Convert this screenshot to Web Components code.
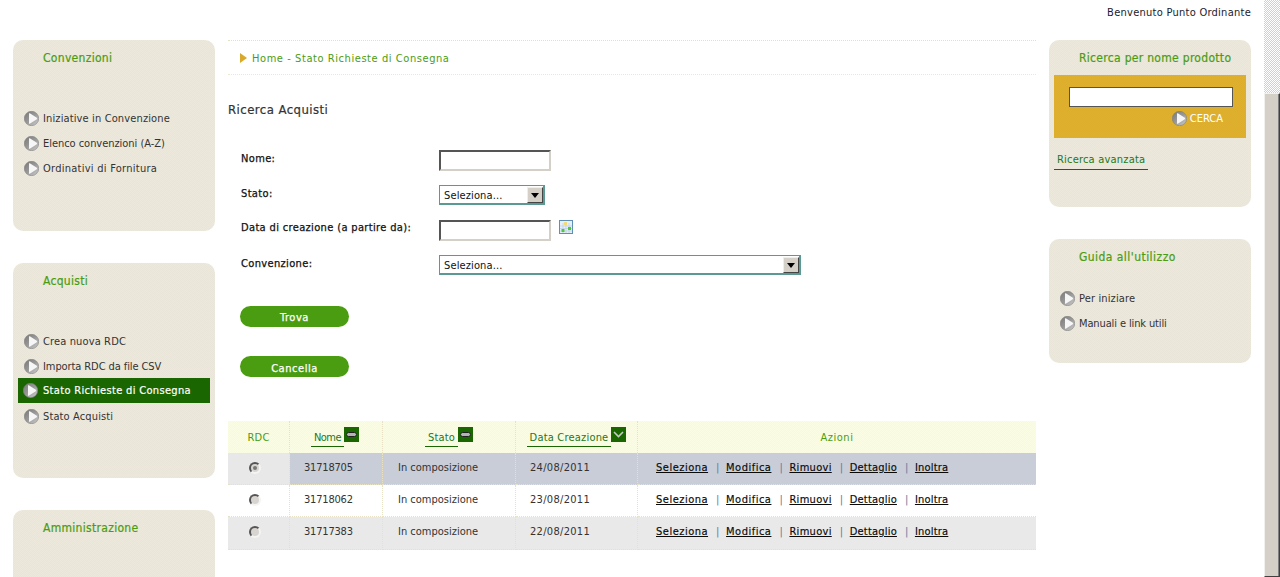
<!DOCTYPE html>
<html lang="it">
<head>
<meta charset="utf-8">
<title>Stato Richieste di Consegna</title>
<style>
  html, body { margin: 0; height: 577px; overflow: hidden; background: #fff; }
  body { font: 11px "DejaVu Sans", Verdana, sans-serif; font-stretch: condensed; color: #333; }
</style>
</head>
<body>
<script>
const BALL = `<svg width="15" height="15" viewBox="0 0 15 15" aria-hidden="true">
  <defs><linearGradient id="b" x1="0" y1="0" x2="1" y2="1"><stop offset="0" stop-color="#777"/><stop offset=".5" stop-color="#999"/><stop offset="1" stop-color="#d0d0d0"/></linearGradient></defs>
  <circle cx="7.5" cy="7.5" r="7.2" fill="url(#b)" stroke="#808080" stroke-width=".6"/>
  <path d="M5 2.2Q5.6 2 6.2 2.4L12.8 6.8Q13.6 7.5 12.8 8.2L6.2 12.6Q5.6 13 5 12.8Z" fill="#f6f6f6"/></svg>`;

function define(name, html, init) {
  const tpl = document.createElement('template');
  tpl.innerHTML = html;
  customElements.define(name, class extends HTMLElement {
    constructor() {
      super();
      this.attachShadow({ mode: 'open' });
      this.shadowRoot.appendChild(tpl.content.cloneNode(true));
      if (init) init(this, this.shadowRoot);
    }
  });
}

define('side-panel', `
  <style>
    :host { display: block; box-sizing: border-box; padding: 10px 5px 0; border-radius: 10px;
      background: repeating-conic-gradient(#ece8dc 0 25%, #e9e5d8 0 50%) 0 0 / 2px 2px; }
    h2 { margin: 0; padding-left: var(--title-indent, 25px); font-size: 12px; line-height: 16px; font-weight: normal; letter-spacing: var(--title-ls, .3px); color: #4b9c10; -webkit-text-stroke: .2px #4b9c10; }
    .body { margin-top: var(--body-gap, 40px); }
  </style>
  <h2><slot name="title"></slot></h2>
  <div class="body"><slot></slot></div>`);

define('menu-item', `
  <style>
    :host { display: flex; align-items: center; gap: 4px; height: 25px; padding-left: 6px; color: #333; letter-spacing: var(--ls, .13px); white-space: nowrap; }
    :host([active]) { background: #1a6600; color: #fff; padding-left: 5px; gap: 5px; margin-top: -1px; margin-bottom: 1px; letter-spacing: .33px; -webkit-text-stroke: .2px #fff; }
    svg { flex: none; }
  </style>
  ${BALL}<slot></slot>`);

define('bread-crumb', `
  <style>
    :host { display: flex; align-items: center; gap: 5px; height: 33px; padding-left: 12px;
      border-top: 1px dotted #e6dfc0; border-bottom: 1px dotted #efe8cc; color: #4b9c10; letter-spacing: .57px; white-space: nowrap; }
    i { width: 0; height: 0; border-left: 7px solid #d9a92a; border-top: 5px solid transparent; border-bottom: 5px solid transparent; }
    span { padding-top: 2px; }
  </style>
  <i></i><span><slot></slot></span>`);

define('form-row', `
  <style>
    :host { display: grid; grid-template-columns: 198px 1fr; height: 35px; padding-left: 13px; }
    label { color: #111; -webkit-text-stroke: .25px #111; padding-top: var(--label-top, 2px); line-height: 14px; letter-spacing: .35px; white-space: nowrap; }
    div { display: flex; align-items: flex-start; gap: 8px; }
  </style>
  <label><slot name="label"></slot></label><div><slot></slot></div>`);

define('text-box', `
  <style>
    :host { display: block; box-sizing: border-box; width: 112px; height: 21px; background: #fff;
      border: 2px solid; border-color: #555 #d4d0c8 #d4d0c8 #555; }
  </style>`);

define('select-box', `
  <style>
    :host { display: flex; box-sizing: border-box; height: 20px; background: #fff; border: 1px solid #5a9a94; border-right-width: 2px; border-bottom-width: 2px; color: #111; }
    span { flex: 1; padding: 1px 0 0 4px; line-height: 18px; letter-spacing: .13px; }
    b { width: 16px; margin: 1px 0 0; box-sizing: border-box; background: #d4d0c8; border: 1px solid; border-color: #eee #444 #444 #eee; display: flex; align-items: center; justify-content: center; }
    b::after { content: ""; border-top: 5px solid #000; border-left: 4px solid transparent; border-right: 4px solid transparent; }
  </style>
  <span><slot></slot></span><b></b>`);

define('pill-button', `
  <style>
    :host { display: flex; align-items: center; justify-content: center; width: 109px; height: 21px; box-sizing: border-box; padding-top: 1px; border-radius: 11px;
      background: #4a9c10; color: #fff; letter-spacing: .55px; -webkit-text-stroke: .25px #fff; }
  </style>
  <slot></slot>`);

define('sort-link', `
  <style>
    :host { display: inline-flex; align-items: flex-start; color: #22781c; letter-spacing: .2px; }
    span { display: block; padding: 1px 3px 0; height: 17px; line-height: 17px; border-bottom: 1px solid #1a6600; white-space: nowrap; }
    svg { flex: none; margin-top: -1px; }
  </style>
  <span><slot></slot></span>
  <svg width="15" height="15" viewBox="0 0 15 15" aria-hidden="true">
    <rect width="15" height="15" fill="#1a6600"/>
    <rect class="pill" x="2.5" y="5.5" width="10" height="4" rx="2" fill="#b4b4b4" stroke="#222" stroke-width="1"/>
    <path class="chev" fill="none" stroke="#c8c8c8" stroke-width="1.6" d="" />
  </svg>`, (el, root) => {
    if (el.hasAttribute('sorted')) {
      root.querySelector('.pill').remove();
      root.querySelector('.chev').setAttribute('d', 'M3 5 7.5 9.5 12 5');
    }
  });

define('radio-dot', `
  <style>
    :host { display: block; box-sizing: border-box; width: 12px; height: 12px; border-radius: 50%; background: #d8d5d0;
      border: 2px solid; border-color: #555 #f4f4f4 #f4f4f4 #555; position: relative; }
    :host([checked])::after { content: ""; position: absolute; left: 2px; top: 2px; width: 4px; height: 4px; border-radius: 50%; background: #777; }
  </style>`);

define('action-links', `
  <style>
    :host { display: flex; align-items: center; gap: 8px; color: #111; white-space: nowrap; letter-spacing: .3px; }
    a { color: #0a0a0a; text-decoration: underline; -webkit-text-stroke: .15px #0a0a0a; }
    a.w { letter-spacing: .5px; }
    a.n { letter-spacing: .2px; }
    i { font-style: normal; color: #5f7ba0; width: 2px; text-align: center; letter-spacing: 0; }
  </style>
  <a class="w">Seleziona</a><i>|</i><a class="w">Modifica</a><i>|</i><a>Rimuovi</a><i>|</i><a class="n">Dettaglio</a><i>|</i><a class="n">Inoltra</a>`);

define('data-row', `
  <style>
    :host { display: grid; grid-template-columns: 62px 93px 133px 122px 1fr; height: var(--row-h, 32px); color: #333; }
    div { display: flex; align-items: center; box-sizing: border-box; padding: 0 0 var(--pb, 2px) 14px; border-right: 1px dotted #e8e1c6; border-bottom: 1px dotted #e8e1c6; background: var(--row-bg); }
    .r { background: var(--check-bg, var(--row-bg)); padding: 0 0 var(--pb, 2px) 21px; }
    .i { letter-spacing: -.2px; }
    .s { padding-left: 15px; }
    .d { letter-spacing: .3px; }
    .a { border-right: 0; padding-left: 18px; }
  </style>
  <div class="r"><slot name="radio"></slot></div>
  <div class="i"><slot name="id"></slot></div>
  <div class="s"><slot name="state"></slot></div>
  <div class="d"><slot name="date"></slot></div>
  <div class="a"><action-links></action-links></div>`);

define('grid-head', `
  <style>
    :host { display: grid; grid-template-columns: 62px 93px 133px 122px 1fr; height: 32px; color: #4b9c10; letter-spacing: .2px;
      background: repeating-conic-gradient(#fbfce4 0 25%, #f9fadc 0 50%) 0 0 / 2px 2px; }
    div { display: flex; align-items: center; justify-content: center; border-right: 1px dotted #e8e1c6; box-sizing: border-box; padding-top: 1px; }
    div:last-child { border-right: 0; letter-spacing: .5px; }
    .nome { letter-spacing: -.5px; margin-left: -2px; }
  </style>
  <div>RDC</div>
  <div><sort-link class="nome">Nome</sort-link></div>
  <div><sort-link>Stato</sort-link></div>
  <div><sort-link sorted>Data Creazione</sort-link></div>
  <div>Azioni</div>`);

define('fake-scrollbar', `
  <style>
    :host { display: flex; flex-direction: column; width: 16px; height: 577px; flex: none;
      background: repeating-conic-gradient(#d4d0c8 0 25%, #fff 0 50%) 0 0 / 2px 2px; }
    i { display: block; margin-top: 93px; flex: 1; box-sizing: border-box; background: #d4d0c8; border: 1px solid; border-color: #f2f0ec #404040 #404040 #f2f0ec; box-shadow: inset -1px 0 #808080; }
  </style>
  <i></i>`);

define('app-page', `
  <style>
    :host { display: flex; width: 1280px; height: 577px; overflow: hidden; }
    .main { flex: 1; min-width: 0; padding-right: 13px; box-sizing: border-box; }
    .top { height: 40px; display: flex; justify-content: flex-end; padding-top: 6px; box-sizing: border-box; color: #1b1b2b; line-height: 14px; letter-spacing: .26px; }
    .cols { display: grid; grid-template-columns: 202px 808px 202px; gap: 13px; padding-left: 13px; }
    .col { display: flex; flex-direction: column; gap: 32px; }
    h1 { margin: 26px 0 0; font-size: 13px; line-height: 18px; font-weight: normal; color: #333; -webkit-text-stroke: .2px #333; letter-spacing: .45px; }
    .form { margin-top: 31px; }
    .btns { display: flex; flex-direction: column; gap: 29px; padding: 16px 0 0 12px; }
    .btns pill-button:last-child { padding-top: 3px; }
    .table { margin-top: 44px; }
    .gold { display: flex; flex-direction: column; align-items: flex-end; height: 63px; box-sizing: border-box; padding: 12px 13px 0 0;
      background: repeating-conic-gradient(#dcae2c 0 25%, #dfb030 0 50%) 0 0 / 2px 2px; color: #fff; }
    .gold .in { box-sizing: border-box; width: 164px; height: 20px; background: #fff; border: 1px solid #555; }
    .cerca { display: flex; align-items: center; gap: 3px; margin: 3px 10px 0 0; height: 16px; }
    .adv { display: inline-block; margin: 14px 0 0; padding: 0 3px 2px; border-bottom: 1px solid #1a6600; color: #22781c; letter-spacing: .2px; line-height: 15px; }
  </style>
  <div class="main">
    <div class="top"><slot name="welcome"></slot></div>
    <div class="cols">
      <div class="col"><slot name="left"></slot></div>
      <div class="mid">
        <bread-crumb>Home - Stato Richieste di Consegna</bread-crumb>
        <h1>Ricerca Acquisti</h1>
        <div class="form">
          <form-row><span slot="label">Nome:</span><text-box></text-box></form-row>
          <form-row><span slot="label">Stato:</span><select-box style="width:106px">Seleziona...</select-box></form-row>
          <form-row style="--label-top:1px"><span slot="label">Data di creazione (a partire da):</span><text-box></text-box>
            <svg width="14" height="14" viewBox="0 0 14 14" aria-hidden="true">
              <rect x=".5" y=".5" width="13" height="13" fill="#e6f0fa" stroke="#5f8fb4"/>
              <path d="M1 6h12M1 8.5h12M1 11h12M4 3v10M7 3v10M10 3v10" stroke="#b9cfe2" stroke-width=".7"/>
              <rect x="5" y="2" width="3" height="3" fill="#f0dc78"/>
              <rect x="2.5" y="9" width="3" height="3" fill="#50c838"/>
              <rect x="9" y="7" width="3" height="3" fill="#50c838"/>
            </svg></form-row>
          <form-row><span slot="label">Convenzione:</span><select-box style="width:362px">Seleziona...</select-box></form-row>
        </div>
        <div class="btns"><pill-button>Trova</pill-button><pill-button>Cancella</pill-button></div>
        <div class="table">
          <grid-head></grid-head>
          <data-row style="--row-bg:#c8cdd8;--check-bg:#e8e8e8"><radio-dot slot="radio" checked></radio-dot><span slot="id">31718705</span><span slot="state">In composizione</span><span slot="date">24/08/2011</span></data-row>
          <data-row style="--row-bg:#fff"><radio-dot slot="radio"></radio-dot><span slot="id">31718062</span><span slot="state">In composizione</span><span slot="date">23/08/2011</span></data-row>
          <data-row style="--row-bg:#e9e9e9;--row-h:33px;--pb:3px"><radio-dot slot="radio"></radio-dot><span slot="id">31717383</span><span slot="state">In composizione</span><span slot="date">22/08/2011</span></data-row>
        </div>
      </div>
      <div class="col">
        <side-panel style="height:167px;--body-gap:9px">
          <span slot="title">Ricerca per nome prodotto</span>
          <div class="gold"><div class="in"></div><div class="cerca">${BALL}<span>CERCA</span></div></div>
          <span class="adv">Ricerca avanzata</span>
        </side-panel>
        <side-panel style="height:124px;--body-gap:21px;--title-ls:.45px">
          <span slot="title">Guida all'utilizzo</span>
          <menu-item>Per iniziare</menu-item>
          <menu-item style="--ls:-.12px">Manuali e link utili</menu-item>
        </side-panel>
      </div>
    </div>
  </div>
  <fake-scrollbar></fake-scrollbar>`);
</script>
<app-page>
  <span slot="welcome">Benvenuto Punto Ordinante</span>
  <side-panel slot="left" style="height:191px">
    <span slot="title">Convenzioni</span>
    <menu-item>Iniziative in Convenzione</menu-item>
    <menu-item style="--ls:-.04px">Elenco convenzioni (A-Z)</menu-item>
    <menu-item style="--ls:.26px">Ordinativi di Fornitura</menu-item>
  </side-panel>
  <side-panel slot="left" style="height:215px">
    <span slot="title">Acquisti</span>
    <menu-item>Crea nuova RDC</menu-item>
    <menu-item style="--ls:-.09px">Importa RDC da file CSV</menu-item>
    <menu-item active>Stato Richieste di Consegna</menu-item>
    <menu-item>Stato Acquisti</menu-item>
  </side-panel>
  <side-panel slot="left" style="height:100px">
    <span slot="title">Amministrazione</span>
  </side-panel>
</app-page>
</body>
</html>
